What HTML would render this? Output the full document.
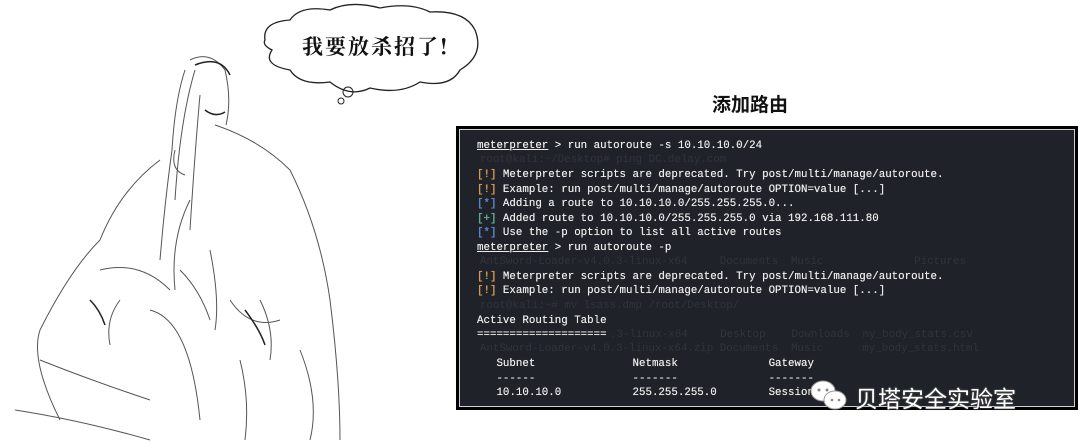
<!DOCTYPE html>
<html><head><meta charset="utf-8"><style>
body{margin:0;width:1080px;height:445px;background:#fff;position:relative;overflow:hidden;font-family:"Liberation Sans","Noto Sans CJK SC",sans-serif}
.term{position:absolute;left:456px;top:126px;width:622px;height:284px;background:#000;box-sizing:border-box;padding:3px}
.inner{width:100%;height:100%;border:1.5px solid #cfcfcf;box-sizing:border-box;background:#1f2228;position:relative;overflow:hidden}
pre{margin:0;position:absolute;left:17px;top:9px;font-family:"Liberation Mono",monospace;font-size:10.8px;line-height:14.55px;color:#ececec;font-weight:500;text-shadow:0 0 0.4px #fff}
u{text-decoration:underline}
.o{color:#e8922c}.b{color:#3d7fe0}.g{color:#3fb58a}
.ghost{position:absolute;font-family:"Liberation Mono",monospace;font-size:10.8px;color:#30343c;white-space:pre}
</style></head><body>
<svg width="480" height="445" style="position:absolute;left:0;top:0" fill="none" stroke="#555" stroke-width="1">
<path d="M265 40 Q262 22 290 20 Q300 5 330 10 Q350 0 380 8 Q410 2 430 12 Q465 10 475 30 Q485 55 460 70 Q450 88 420 82 Q400 95 370 88 Q350 98 330 82 Q300 86 290 70 Q262 65 272 50 Q262 45 265 40Z" stroke="#222" stroke-width="1.3" fill="#fff"/>
<circle cx="348" cy="92" r="5" stroke="#222"/><circle cx="341" cy="101" r="3" stroke="#222"/>
<path d="M185 70 Q175 100 172 150 Q165 200 160 260 M190 60 Q210 50 225 70 Q232 100 226 125 M195 70 Q180 120 175 200 M200 95 Q195 150 190 230 M215 125 Q260 140 290 170 Q320 230 330 300 Q340 380 340 440 M160 160 Q120 190 100 240 Q70 270 40 330 Q30 360 60 420 M190 200 Q170 240 175 290 M100 270 Q140 260 170 290 M230 300 Q250 330 280 320 M40 360 Q90 380 150 400 M15 410 Q80 420 150 440 M150 310 Q190 320 200 420 M240 360 Q250 400 245 440 M120 300 Q105 320 110 345 M210 250 Q220 300 215 330 M175 150 Q170 170 185 175 M260 300 Q275 330 270 360 M180 270 Q200 290 210 320 M300 350 Q320 400 310 440"/>
<path d="M195 65 Q220 55 230 75 M205 110 Q215 118 225 112 M245 310 Q260 330 265 345 M90 300 Q100 310 105 325" stroke="#222" stroke-width="1.5"/>
</svg>
<div style="position:absolute;left:302px;top:31px;font-family:'Noto Serif CJK SC',serif;font-size:21px;font-weight:bold;letter-spacing:2px;color:#111">我要放杀招了!</div>
<div style="position:absolute;left:712px;top:90px;font-size:19px;font-weight:bold;color:#111;font-family:'Noto Sans CJK SC',sans-serif">添加路由</div>
<div class="term"><div class="inner">
<div class="ghost" style="left:20px;top:24px">root@kali:~/Desktop# ping DC.delay.com</div>
<div class="ghost" style="left:20px;top:126px">AntSword-Loader-v4.0.3-linux-x64     Documents  Music              Pictures</div>
<div class="ghost" style="left:20px;top:170px">root@kali:~# mv lsass.dmp /root/Desktop/</div>
<div class="ghost" style="left:150px;top:199px">.3-linux-x64     Desktop    Downloads  my_body_stats.csv</div>
<div class="ghost" style="left:20px;top:213px">AntSword-Loader-v4.0.3-linux-x64.zip Documents  Music      my_body_stats.html</div>
<pre><u>meterpreter</u> &gt; run autoroute -s 10.10.10.0/24

<span class="o">[!]</span> Meterpreter scripts are deprecated. Try post/multi/manage/autoroute.
<span class="o">[!]</span> Example: run post/multi/manage/autoroute OPTION=value [...]
<span class="b">[*]</span> Adding a route to 10.10.10.0/255.255.255.0...
<span class="g">[+]</span> Added route to 10.10.10.0/255.255.255.0 via 192.168.111.80
<span class="b">[*]</span> Use the -p option to list all active routes
<u>meterpreter</u> &gt; run autoroute -p

<span class="o">[!]</span> Meterpreter scripts are deprecated. Try post/multi/manage/autoroute.
<span class="o">[!]</span> Example: run post/multi/manage/autoroute OPTION=value [...]

Active Routing Table
====================

   Subnet               Netmask              Gateway
   ------               -------              -------
   10.10.10.0           255.255.255.0        Session 4</pre>
</div></div>
<svg width="44" height="36" style="position:absolute;left:808px;top:378px">
<ellipse cx="15" cy="13" rx="12" ry="10" fill="#fff" stroke="#999"/>
<ellipse cx="27" cy="22" rx="11" ry="9" fill="#fff" stroke="#999"/>
<circle cx="11" cy="12" r="1.5" fill="#888"/><circle cx="19" cy="12" r="1.5" fill="#888"/>
<circle cx="24" cy="22" r="1.3" fill="#888"/><circle cx="31" cy="22" r="1.3" fill="#888"/>
</svg>
<div style="position:absolute;left:855px;top:380px;font-size:23px;color:#fff;font-family:'Noto Sans CJK SC',sans-serif;text-shadow:0 0 2px #666,0 0 1px #444">贝塔安全实验室</div>
</body></html>
